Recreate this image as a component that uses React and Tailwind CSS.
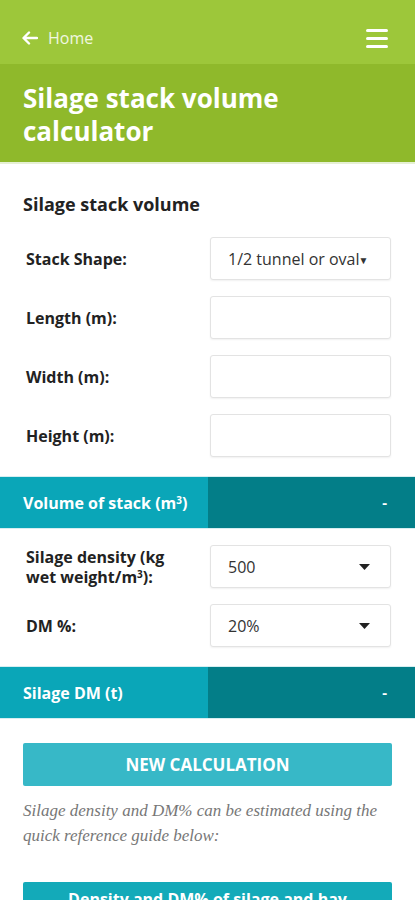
import { useState } from "react";

const FONT = { fontFamily: "'Open Sans', Lato, sans-serif" };

const Field = ({ label, children }) => (
  <div className="flex items-center h-[43px]">
    <div className="w-[210px] pl-[26px] text-[16px] font-bold leading-[20px] text-[#222]">{label}</div>
    {children}
  </div>
);

const TextBox = () => (
  <input type="text" className="w-[181px] h-[43px] rounded-[3px] border border-[#e3e3e3] bg-white px-3 text-[16px] shadow-[0_1px_2px_rgba(0,0,0,0.06)] outline-none" />
);

const Select = ({ value, tight }) => (
  <div className="w-[181px] h-[43px] rounded-[3px] border border-[#e3e3e3] bg-white shadow-[0_1px_2px_rgba(0,0,0,0.06)] flex items-center text-[16px] text-[#333]">
    {tight ? (
      <div className="flex items-center pl-[17px]">
        <span>{value}</span>
        <span className="text-[10px] mt-[3px] -ml-[1px]">▼</span>
      </div>
    ) : (
      <div className="flex w-full items-center justify-between pl-[17px] pr-[20px]">
        <span>{value}</span>
        <svg width="11" height="6" viewBox="0 0 11 6"><path d="M0 0h11L5.5 6z" fill="#222" /></svg>
      </div>
    )}
  </div>
);

const ResultBar = ({ title }) => (
  <div className="flex h-[53px] border-y border-[#d6eef1]">
    <div className="w-[208px] bg-[#0aa6b8] flex items-center pl-[23px] text-white font-bold text-[16px]">{title}</div>
    <div className="flex-1 bg-[#037e88] flex items-center justify-end pr-[28px] text-white font-bold text-[15px]">-</div>
  </div>
);

export default function App() {
  const [shape] = useState("1/2 tunnel or oval");

  return (
    <div className="w-[415px] h-[900px] overflow-hidden bg-white" style={FONT}>
      {/* Header */}
      <div className="h-[64px] bg-[#9dc73a] flex items-center justify-between pl-[22px] pr-[27px]">
        <div className="flex items-center gap-[10px] text-white/85 text-[16px] mt-[12px]">
          <svg width="16" height="14" viewBox="0 0 16 14" fill="none" stroke="white" strokeWidth="2.4" strokeLinecap="round" strokeLinejoin="round">
            <path d="M15 7H2M7 1.5L1.5 7 7 12.5" />
          </svg>
          <span>Home</span>
        </div>
        <div className="flex flex-col gap-[5px] mt-[12px]">
          <span className="block w-[22px] h-[3px] bg-white rounded-sm" />
          <span className="block w-[22px] h-[3px] bg-white rounded-sm" />
          <span className="block w-[22px] h-[3px] bg-white rounded-sm" />
        </div>
      </div>
      <div className="h-[100px] bg-[#8fb92b] pl-[23px] pt-[18px] border-b-2 border-[#e6f0d4]">
        <h1 className="text-white font-bold text-[26px] leading-[33px]">Silage stack volume<br />calculator</h1>
      </div>

      {/* Form */}
      <div className="pt-[29px]">
        <h2 className="pl-[23px] text-[18px] font-bold text-[#222] leading-[22px]">Silage stack volume</h2>
        <div className="flex flex-col gap-[16px] mt-[22px] pb-[19px]">
          <Field label="Stack Shape:"><Select value={shape} tight /></Field>
          <Field label="Length (m):"><TextBox /></Field>
          <Field label="Width (m):"><TextBox /></Field>
          <Field label="Height (m):"><TextBox /></Field>
        </div>
      </div>

      <ResultBar title={<span>Volume of stack (m<sup className="text-[10px]">3</sup>)</span>} />

      <div className="flex flex-col gap-[16px] pt-[16px] pb-[19px]">
        <Field label={<span>Silage density (kg<br />wet weight/m<sup className="text-[10px]">3</sup>):</span>}><Select value="500" /></Field>
        <Field label="DM %:"><Select value="20%" /></Field>
      </div>

      <ResultBar title="Silage DM (t)" />

      <div className="px-[23px] pt-[24px]">
        <button className="w-full h-[43px] rounded-[2px] bg-[#37b8c7] text-white font-bold text-[17px]">NEW CALCULATION</button>
        <p className="mt-[12px] text-[17px] leading-[25px] italic text-[#777]" style={{ fontFamily: "'Liberation Serif', Georgia, serif" }}>
          Silage density and DM% can be estimated using the quick reference guide below:
        </p>
        <div className="mt-[34px] h-[40px] bg-[#13aab9] rounded-t-[2px] text-white font-bold text-[16px] text-center pt-[5px]">
          Density and DM% of silage and hay
        </div>
      </div>
    </div>
  );
}
